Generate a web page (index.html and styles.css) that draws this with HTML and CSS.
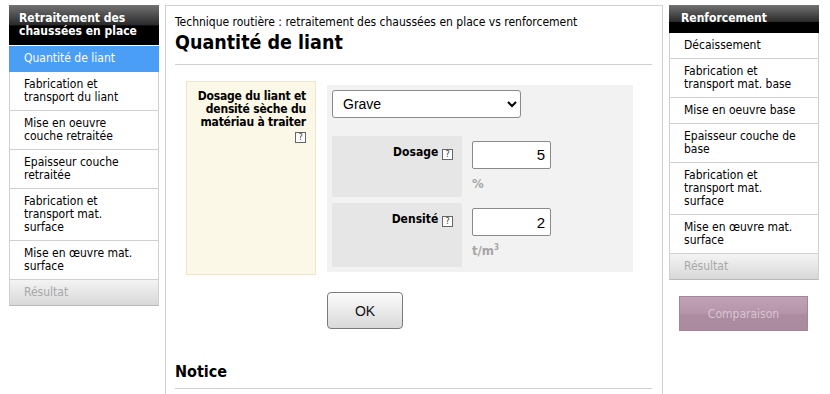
FILE: index.html
```html
<!DOCTYPE html>
<html lang="fr">
<head>
<meta charset="utf-8">
<title>Quantité de liant</title>
<link rel="stylesheet" href="styles.css">
</head>
<body>
<div class="page">
  <nav class="side side-left">
    <div class="side-head">Retraitement des chaussées en place</div>
    <a class="item active">Quantité de liant</a>
    <a class="item">Fabrication et transport du liant</a>
    <a class="item">Mise en oeuvre couche retraitée</a>
    <a class="item">Epaisseur couche retraitée</a>
    <a class="item">Fabrication et transport mat. surface</a>
    <a class="item">Mise en œuvre mat. surface</a>
    <div class="item result">Résultat</div>
  </nav>

  <main class="main">
    <div class="subtitle">Technique routière : retraitement des chaussées en place vs renforcement</div>
    <h1 class="title">Quantité de liant</h1>
    <div class="rule"></div>

    <div class="form">
      <div class="group-label">
        <div>Dosage du liant et densité sèche du matériau à traiter</div>
        <div class="help-line"><span class="help">?</span></div>
      </div>
      <div class="panel">
        <select class="select"><option>Grave</option></select>
        <div class="field">
          <div class="field-label">Dosage <span class="help">?</span></div>
          <div class="field-input">
            <input class="num" type="text" value="5">
            <div class="unit">%</div>
          </div>
        </div>
        <div class="field">
          <div class="field-label">Densité <span class="help">?</span></div>
          <div class="field-input">
            <input class="num" type="text" value="2">
            <div class="unit">t/m<sup>3</sup></div>
          </div>
        </div>
      </div>
    </div>

    <div class="actions"><button class="ok">OK</button></div>

    <h2 class="notice">Notice</h2>
    <div class="rule"></div>
  </main>

  <aside class="side side-right">
    <div class="side-head small">Renforcement</div>
    <a class="item">Décaissement</a>
    <a class="item">Fabrication et transport mat. base</a>
    <a class="item">Mise en oeuvre base</a>
    <a class="item">Epaisseur couche de base</a>
    <a class="item">Fabrication et transport mat. surface</a>
    <a class="item">Mise en œuvre mat. surface</a>
    <div class="item result">Résultat</div>
    <div class="compare-wrap"><button class="compare">Comparaison</button></div>
  </aside>
</div>
</body>
</html>
```

FILE: styles.css
```css
* { box-sizing: border-box; }

html, body {
  margin: 0;
  padding: 0;
  background: #fff;
  height: 100%;
  overflow: hidden;
}

body {
  font-family: "DejaVu Sans Condensed", "DejaVu Sans", sans-serif;
  font-size: 12px;
  color: #000;
}

.page {
  display: flex;
  align-items: flex-start;
  gap: 6px;
  padding: 5px 0 0 9px;
  height: 100%;
}

.side {
  width: 150px;
  flex: none;
  display: flex;
  flex-direction: column;
}

.side-head {
  background: linear-gradient(#727272 0%, #2a2a2a 50%, #000 52%, #000 100%);
  color: #fff;
  font-weight: bold;
  line-height: 13px;
  padding: 7px 10px 7px 10px;
  height: 40px;
}

.side-head.small {
  height: 28px;
  padding: 7px 12px;
  background: linear-gradient(#727272 0%, #2a2a2a 60%, #000 62%, #000 100%);
}

.item {
  display: block;
  line-height: 13px;
  padding: 6px 20px 6px 14px;
  border-left: 1px solid #d0d0d0;
  border-right: 1px solid #d0d0d0;
  border-bottom: 1px solid #d0d0d0;
  color: #000;
  background: #fff;
}

.item.active {
  background: #4a9ef6;
  color: #fff;
  border-color: #4a9ef6;
  margin-top: 1px;
  height: 26px;
}

.item.result {
  color: #a8a8a8;
  background: linear-gradient(#f4f4f4, #d8d8d8);
  border-bottom: 1px solid #b8b8b8;
}

.compare-wrap {
  padding: 16px 10px 0 10px;
}

.compare {
  width: 129px;
  height: 35px;
  font-family: "DejaVu Sans Condensed", "DejaVu Sans", sans-serif;
  font-size: 12px;
  color: #d9c4d2;
  background: linear-gradient(#c0a1b5 0%, #b595aa 50%, #ad8ca2 52%, #a98a9f 100%);
  border: 1px solid #a2879a;
  border-radius: 0;
  padding: 0;
}

.main {
  width: 498px;
  flex: none;
  height: 389px;
  border-top: 1px solid #d0d0d0;
  border-left: 1px solid #d0d0d0;
  border-right: 1px solid #d0d0d0;
  padding: 9px 10px 0 9px;
}

.subtitle {
  line-height: 14px;
}

.title {
  margin: 2px 0 0 0;
  font-size: 19.5px;
  line-height: 24px;
  font-weight: bold;
}

.rule {
  height: 1px;
  background: #cfcfcf;
  margin-top: 9px;
}

.form {
  display: flex;
  align-items: flex-start;
  gap: 11px;
  margin: 16px 0 0 11px;
}

.group-label {
  width: 130px;
  height: 194px;
  background: #fcf8e8;
  border: 1px solid #eee6cc;
  font-weight: bold;
  text-align: right;
  line-height: 13px;
  padding: 8px 9px 0 0;
  letter-spacing: -0.2px;
}

.help-line {
  margin-top: 1px;
  line-height: 11px;
}

.help {
  display: inline-block;
  width: 11px;
  height: 11px;
  border: 1px solid #666;
  font-size: 8px;
  line-height: 9px;
  text-align: center;
  font-weight: normal;
  font-family: "DejaVu Sans", sans-serif;
  vertical-align: -1px;
  color: #333;
  background: #fff;
  letter-spacing: 0;
}

.panel {
  margin-top: 4px;
  width: 306px;
  height: 187px;
  background: #f2f2f2;
  padding: 5px;
  display: flex;
  flex-direction: column;
  gap: 6px;
}

.select {
  width: 189px;
  height: 28px;
  font-family: "Liberation Sans", Arial, sans-serif;
  font-size: 14px;
  padding: 0 6px;
  border: 1px solid #8a8a8a;
  border-radius: 3px;
  background: #fff;
  color: #000;
  margin-bottom: 12px;
}

.field {
  display: flex;
  gap: 10px;
  height: 62px;
}

.field + .field {
  height: 64px;
}

.field-label {
  width: 130px;
  background: #e6e6e6;
  font-weight: bold;
  text-align: right;
  padding: 10px 9px 0 0;
  line-height: 13px;
}

.field-input {
  padding-top: 5px;
}

.num {
  width: 79px;
  height: 28px;
  border: 1px solid #8a8a8a;
  border-radius: 2px;
  text-align: right;
  font-family: "Liberation Sans", Arial, sans-serif;
  font-size: 15px;
  padding: 0 5px;
  background: #fff;
  color: #000;
}

.unit {
  color: #a6a6a6;
  font-weight: bold;
  font-size: 13px;
  margin-top: 8px;
  line-height: 14px;
}

.unit sup {
  font-size: 8px;
  line-height: 0;
}

.actions {
  margin: 17px 0 0 152px;
}

.ok {
  width: 76px;
  height: 37px;
  font-family: "Liberation Sans", Arial, sans-serif;
  font-size: 14px;
  color: #111;
  background: linear-gradient(#fbfbfb, #d9d9d9);
  border: 1px solid #7a7a7a;
  border-radius: 4px;
  padding: 0;
}

.notice {
  margin: 34px 0 0 0;
  font-size: 16px;
  line-height: 18px;
  font-weight: bold;
}

.notice + .rule {
  margin-top: 7px;
}
```
